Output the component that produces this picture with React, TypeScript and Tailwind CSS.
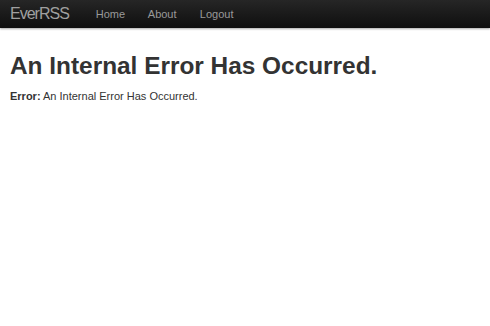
export default function App() {
  return (
    <div className="min-h-[326px] w-full bg-white font-['Liberation_Sans',Arial,sans-serif] text-[#333]">
      {/* Top navbar */}
      <div className="flex h-[28px] items-center bg-gradient-to-b from-[#262626] to-[#0f0f0f] shadow-[0_1px_2px_rgba(0,0,0,0.35)]">
        <div className="ml-[10px] text-[16px] leading-none tracking-[-1px] text-[#a0a0a0]">EverRSS</div>
        <nav className="ml-[27px] flex gap-[23px] text-[11px] text-[#999]">
          <a className="w-[29px]">Home</a>
          <a className="w-[29px]">About</a>
          <a>Logout</a>
        </nav>
      </div>

      {/* Content */}
      <div className="px-[10px] pt-[22px]">
        <h1 className="text-[24.4px] font-bold leading-[32px]">An Internal Error Has Occurred.</h1>
        <p className="mt-[6px] text-[11px] leading-[16px]">
          <strong>Error:</strong> An Internal Error Has Occurred.
        </p>
      </div>
    </div>
  );
}
